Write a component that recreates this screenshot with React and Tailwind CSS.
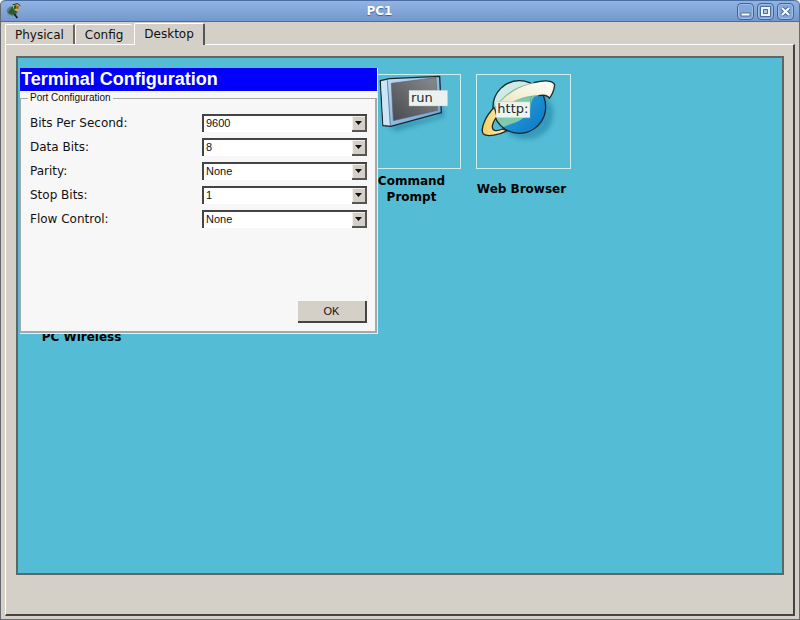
import React, { useState } from "react";

const portFields = [
  { id: "bits-per-second", label: "Bits Per Second:", value: "9600", options: ["2400", "4800", "9600", "19200", "38400", "57600", "115200"] },
  { id: "data-bits", label: "Data Bits:", value: "8", options: ["5", "6", "7", "8"] },
  { id: "parity", label: "Parity:", value: "None", options: ["None", "Even", "Odd", "Mark", "Space"] },
  { id: "stop-bits", label: "Stop Bits:", value: "1", options: ["1", "1.5", "2"] },
  { id: "flow-control", label: "Flow Control:", value: "None", options: ["None", "Xon / Xoff", "Hardware"] },
];

const AppLogo = () => (
  <svg className="size-4" viewBox="0 0 48 48" aria-hidden="true">
    <ellipse cx="19" cy="24" rx="17" ry="14" fill="#5d7f86" />
    <path d="M6 28 L20 9 L33 13 L31 30 L18 35 Z" fill="#2c5a2a" />
    <path d="M19 8 L38 3 L43 13 L36 25 L25 22 Z" fill="#d8b25c" />
    <path d="M24 8 L31 6 L32 15 L24 20 Z" fill="#1c5b22" />
    <path d="M33 8 L40 9 L37 19 L31 18 Z" fill="#a3682c" />
    <path d="M20 5 L35 2 L43 8" fill="none" stroke="#2c2a1a" strokeWidth="3" />
    <path d="M8 31 L20 36 L33 29" fill="none" stroke="#4a6468" strokeWidth="3" />
    <path d="M25 33 L34 45" stroke="#171717" strokeWidth="5" />
  </svg>
);

const WindowButton = ({ label, children }) => (
  <button
    type="button"
    aria-label={label}
    className="size-[17px] rounded-[4px] border border-[#3c65a0] bg-[#83a7da] shadow-[inset_0_0_0_1px_#a0bde6]"
  >
    <svg className="size-[15px]" viewBox="0 0 15 15" fill="none">
      {children}
    </svg>
  </button>
);

const TitleBar = () => (
  <header className="flex h-[22px] shrink-0 items-center rounded-t-[5px] border-t border-b border-t-[#4a6ea3] border-b-[#426fa8] bg-linear-to-b from-[#92b3e3] to-[#7398cd] px-[5px]">
    <AppLogo />
    <h1 className="flex-1 text-center text-xs font-bold text-white [text-shadow:0_1px_1px_#3c5f93]">PC1</h1>
    <div className="flex gap-[3px]">
      <WindowButton label="Minimize">
        <path d="M3 9h9v3h-9z" fill="#fff" stroke="#4a70a8" />
      </WindowButton>
      <WindowButton label="Maximize">
        <path d="M2.500 2.500h10v10h-10z" stroke="#4a70a8" />
        <path d="M4 4h7v7h-7z" stroke="#f0f5fd" strokeWidth="2" />
        <path d="M5.500 5.500h4v4h-4z" stroke="#4a70a8" fill="#a9c3e8" />
      </WindowButton>
      <WindowButton label="Close">
        <path d="M4 4l7 7M11 4l-7 7" stroke="#446ba4" strokeWidth="4" />
        <path d="M4 4l7 7M11 4l-7 7" stroke="#fff" strokeWidth="2" />
      </WindowButton>
    </div>
  </header>
);

const Tabs = ({ active, onChange }) => (
  <nav className="flex h-[22px] shrink-0 items-end pl-1" role="tablist">
    {["Physical", "Config", "Desktop"].map((tab) => (
      <button
        key={tab}
        type="button"
        role="tab"
        aria-selected={active === tab}
        onClick={() => onChange(tab)}
        className={
          active === tab
            ? "relative -mb-px ml-0.5 h-[22px] rounded-t-[2px] border-t border-l border-r-2 border-t-white border-l-white border-r-[#555] bg-[#d4d0c8] px-[9px] pb-px"
            : "h-[20px] rounded-t-[2px] border-t border-l border-r-2 border-t-white border-l-white border-r-[#666] px-[9px] last:border-r-0 nth-2:border-r-0"
        }
      >
        {tab}
      </button>
    ))}
  </nav>
);

const CommandIcon = () => (
  <svg className="size-full" viewBox="-9 45 279 279">
    <defs>
      <linearGradient id="screen" x1="0" y1="1" x2="1" y2="0">
        <stop offset="0" stopColor="#484a4e" />
        <stop offset="1" stopColor="#898b8f" />
      </linearGradient>
      <linearGradient id="frame" x1="0" y1="0" x2="1" y2="1">
        <stop offset="0" stopColor="#c3e2f5" />
        <stop offset="1" stopColor="#639ed3" />
      </linearGradient>
      <filter id="soft">
        <feGaussianBlur stdDeviation="7" />
      </filter>
    </defs>
    <path d="M50 198 L206 166 L216 120 L224 170 L80 214 Z" fill="#2587a5" opacity="0.65" filter="url(#soft)" />
    <path d="M31 62 L58 56 L209 49 L214 158 L62 199 L39 197 Z" fill="url(#frame)" stroke="#20252b" strokeWidth="4" strokeLinejoin="round" />
    <path d="M33 64 L51 62 L60 196 L40 194 Z" fill="#cee5f5" />
    <path d="M52 61 L61 197" stroke="#3c617c" strokeWidth="2" />
    <path d="M64 70 L198 53 L202 151 L70 182 Z" fill="url(#screen)" stroke="#5b6168" strokeWidth="2" />
    <path d="M117 91 H233 V138 H117 Z" fill="#e9f2ef" stroke="#9fb6ba" strokeWidth="1" />
    <text x="123" y="125" fontSize="39" fill="#26282b">run</text>
  </svg>
);

const BrowserIcon = () => (
  <svg className="size-full" viewBox="321 45 279 279">
    <defs>
      <linearGradient id="ocean" x1="0" y1="0" x2="1" y2="1">
        <stop offset="0.3" stopColor="#2ba1dc" />
        <stop offset="1" stopColor="#0876c5" />
      </linearGradient>
      <linearGradient id="ring" x1="0" y1="0" x2="1" y2="0">
        <stop offset="0" stopColor="#f7cf60" />
        <stop offset="1" stopColor="#fff1c3" />
      </linearGradient>
      <linearGradient id="band" x1="0" y1="1" x2="1" y2="0">
        <stop offset="0" stopColor="#e8e3b0" />
        <stop offset="1" stopColor="#fff" />
      </linearGradient>
      <clipPath id="globe">
        <circle cx="448" cy="141" r="79" />
      </clipPath>
    </defs>
    <ellipse cx="468" cy="162" rx="82" ry="76" fill="#2486aa" opacity="0.6" filter="url(#soft)" />
    <circle cx="448" cy="141" r="79" fill="url(#ocean)" />
    <g clipPath="url(#globe)">
      <path d="M360 50 H530 L500 105 C475 120 490 145 470 165 C440 195 410 190 385 210 L350 180 Z" fill="#7ecba8" />
      <path d="M365 50 H535 L490 72 C440 78 410 95 375 140 Z" fill="#cfe9e4" />
      <path d="M490 95 C475 120 487 145 470 165" fill="none" stroke="#46a792" strokeWidth="2" />
    </g>
    <circle cx="448" cy="141" r="79" fill="none" stroke="#182832" strokeWidth="4" />
    <path d="M373 142 C345 170 330 208 340 222 C352 232 388 225 412 212 L398 207 C380 215 368 214 367 201 C367 190 373 180 381 170 Z" fill="url(#ring)" stroke="#20282c" strokeWidth="4" strokeLinejoin="round" />
    <path d="M374 144 C410 96 462 72 510 66 C532 60 551 62 554 75 C552 90 547 104 538 115 C534 106 522 104 505 106 C470 108 440 118 424 130 L400 150 Z" fill="url(#band)" />
    <path d="M490 68 C528 59 551 62 554 75 C552 90 547 104 538 115 C534 106 522 104 505 107" fill="none" stroke="#20282c" strokeWidth="4" strokeLinejoin="round" />
    <path d="M374 144 C410 96 452 76 490 69 M505 107 C470 108 440 118 424 130" fill="none" stroke="#8da69b" strokeWidth="2" />
    <path d="M378 125 H480 V173 H378 Z" fill="#eef4f0" stroke="#9fb6ba" strokeWidth="1" />
    <text x="382" y="159" fontSize="39" fill="#26282b">http:</text>
  </svg>
);

const Shortcut = ({ label, className, children }) => (
  <a href="#" className={`flex w-[95px] flex-col ${className}`}>
    <span className="block size-[95px] border border-[#cdf0ee]">{children}</span>
    <span className="mt-1 flex h-8 w-[91px] items-center justify-center text-center text-[12px] leading-4 font-bold">
      {label}
    </span>
  </a>
);

const PortField = ({ field }) => (
  <div className="flex h-[18px] items-center">
    <label htmlFor={field.id} className="w-[172px]">
      {field.label}
    </label>
    <div className="relative h-full flex-1">
      <select
        id={field.id}
        defaultValue={field.value}
        className="block h-full w-full appearance-none border-t-2 border-l-2 border-[#444] bg-white px-0.5 pb-0.5 font-['Liberation_Sans',sans-serif] text-[11px] leading-[14px]"
      >
        {field.options.map((option) => (
          <option key={option}>{option}</option>
        ))}
      </select>
      <span className="pointer-events-none absolute top-0.5 right-0 flex h-4 w-[15px] items-center justify-center border-r-2 border-b-2 border-[#555] bg-[#d4d0c8] shadow-[inset_1px_1px_0_#f4f2ee]">
        <svg className="h-1 w-[7px]" viewBox="0 0 7 4">
          <path d="M0 0h7L3.500 4z" fill="#111" />
        </svg>
      </span>
    </div>
  </div>
);

const TerminalDialog = () => (
  <form
    role="dialog"
    aria-labelledby="dialog-title"
    onSubmit={(e) => e.preventDefault()}
    className="absolute top-[10px] left-[2px] flex h-[266px] w-[358px] flex-col border-r border-b border-[#e4efef] bg-[#f7f7f7]"
  >
    <h2 id="dialog-title" className="h-[23px] bg-[#0000fb] px-px font-['Liberation_Sans',sans-serif] text-[18px] leading-[23px] font-bold text-white">
      Terminal Configuration
    </h2>
    <fieldset className="flex flex-1 flex-col border border-r-2 border-b-2 border-[#a4a8a8] pr-2 pb-2 pl-[9px]">
      <legend className="-ml-0.5 px-0.5 font-['Liberation_Sans',sans-serif] text-[10px] leading-[14px]">Port Configuration</legend>
      <div className="mt-[9px] flex flex-col gap-1.5">
        {portFields.map((field) => (
          <PortField key={field.id} field={field} />
        ))}
      </div>
      <button
        type="submit"
        className="mt-auto h-[22px] w-[69px] self-end border-r-2 border-b-2 border-[#444] bg-[#d4d0c8] font-['Liberation_Sans',sans-serif] text-[11px]"
      >
        OK
      </button>
    </fieldset>
  </form>
);

const App = () => {
  const [activeTab, setActiveTab] = useState("Desktop");

  return (
    <div className="flex h-screen flex-col rounded-t-[5px] border-x border-b border-[#666b72] bg-[#d4d0c8] font-['DejaVu_Sans',sans-serif] text-[12px] text-[#111]">
      <TitleBar />
      <Tabs active={activeTab} onChange={setActiveTab} />

      {/* Tab page */}
      <main className="mx-1 mb-[3px] flex flex-1 border-t border-r-2 border-b-2 border-l border-t-white border-r-[#444] border-b-[#444] border-l-white pt-[11px] pr-[9px] pb-[39px] pl-[10px]">
        <div className="relative flex-1 border-2 border-[#5d6668] bg-[#54bcd4] pt-4 pl-[18px]">
          <div className="grid grid-cols-[repeat(auto-fill,95px)] gap-x-[15px] gap-y-[17px] text-black">
            <Shortcut label="Command Prompt" className="col-start-4 row-start-1">
              <CommandIcon />
            </Shortcut>
            <Shortcut label="Web Browser" className="col-start-5 row-start-1">
              <BrowserIcon />
            </Shortcut>
            <Shortcut label="PC Wireless" className="col-start-1 row-start-2" />
          </div>
          <TerminalDialog />
        </div>
      </main>
    </div>
  );
};

export default App;
